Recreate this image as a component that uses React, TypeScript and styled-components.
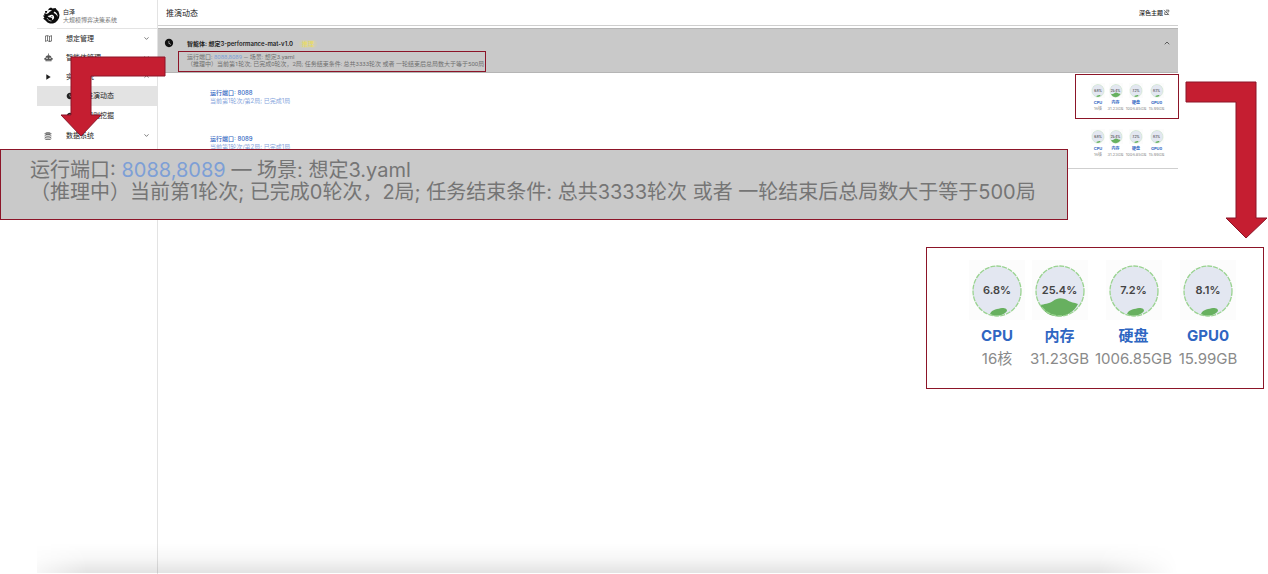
import React from "react";
import styled, { createGlobalStyle, css } from "styled-components";
import { ChevronDown, ChevronUp } from "lucide-react";
import { MdOutlineMap, MdWatchLater } from "react-icons/md";

const RED = "#c51e31";
const DARK_RED = "#8c1528";
const SANS = '"Inter", "Noto Sans CJK SC", sans-serif';

const GlobalStyle = createGlobalStyle`
  * { box-sizing: border-box; }
  body { margin: 0; background: #fff; color: #222; font-family: ${SANS}; }
  button { font: inherit; color: inherit; background: none; border: 0; padding: 0; cursor: pointer; }
  a { color: inherit; text-decoration: none; }
  h1, h2, p, ul { margin: 0; padding: 0; font-weight: inherit; }
  ul { list-style: none; }
  svg { display: block; flex: none; }
`;

const Page = styled.div`
  position: relative;
  min-height: 100vh;
  padding: 0 90px 0 37px;
  display: flex;
  overflow: hidden;
`;

/* ---------- sidebar ---------- */

const Sidebar = styled.aside`
  flex: none;
  width: 121px;
  border-right: 1px solid #e3e3e3;
`;

const Brand = styled.div`
  display: flex;
  align-items: center;
  gap: 3px;
  height: 29px;
  padding: 3px 0 0 6px;
  border-bottom: 1px solid #e3e3e3;
`;

const BrandName = styled.p`
  font-size: 6px;
  line-height: 8px;
`;

const BrandNote = styled(BrandName)`
  color: #777;
`;

const MenuButton = styled.button`
  display: grid;
  grid-template-columns: 8px 1fr 7px;
  align-items: center;
  column-gap: 14px;
  width: 100%;
  height: 19px;
  padding: 0 7px;
  font-size: 7px;
  line-height: 10px;
  text-align: left;
`;

const MenuLink = styled.a<{ $active?: boolean }>`
  display: flex;
  align-items: center;
  gap: 12px;
  height: 20px;
  padding-left: 29px;
  font-size: 7px;
  line-height: 10px;
  background: ${(p) => (p.$active ? "#e3e3e3" : "transparent")};
`;

/* ---------- main column ---------- */

const Main = styled.main`
  flex: 1;
  min-width: 0;
`;

const TopBar = styled.header`
  display: flex;
  align-items: center;
  justify-content: space-between;
  height: 26px;
  margin-bottom: 2px;
  padding: 0 8px;
  border-bottom: 1px solid #cfcfcf;
`;

const Title = styled.h1`
  font-size: 8px;
  line-height: 12px;
`;

const ThemeButton = styled.button`
  display: flex;
  align-items: center;
  font-size: 6px;
  font-weight: 500;
  line-height: 10px;
`;

const AgentHead = styled.section`
  display: grid;
  grid-template-columns: 10px 1fr 8px;
  align-items: start;
  column-gap: 13px;
  height: 45px;
  padding: 9px 7px 0 6px;
  background: #c9c9c9;
  border-top: 1px solid #b5b5b5;
  border-bottom: 1px solid #b5b5b5;
`;

const AgentTitle = styled.h2`
  display: flex;
  align-items: center;
  gap: 6px;
  height: 11px;
  margin-bottom: 4px;
  font-size: 6px;
  font-weight: 600;
`;

const Tag = styled.span`
  padding: 0 3px;
  border-radius: 4px;
  background: #cfcdb9;
  color: #e9dc62;
  font-size: 6px;
  font-weight: 500;
  line-height: 8px;
`;

const AgentNote = styled.p`
  color: #6f6f6f;
  font-family: Roboto, "Noto Sans CJK SC", sans-serif;
  font-size: 6px;
  line-height: 7px;
  white-space: nowrap;
`;

const CollapseButton = styled.button`
  padding-top: 1px;
`;

const Ports = styled.span`
  color: #7d9fd6;
`;

const PortList = styled.ul`
  padding-bottom: 3px;
  border-bottom: 1px solid #cfcfcf;
`;

const PortRow = styled.li`
  display: flex;
  justify-content: space-between;
  height: 46px;
  padding: 10px 13px 0 52px;
`;

const PortText = styled.div`
  padding-top: 6px;
`;

const PortName = styled.a`
  display: block;
  color: #2f66c2;
  font-size: 6px;
  font-weight: 500;
  line-height: 8px;
`;

const PortState = styled.p`
  color: #86a5dc;
  font-size: 6px;
  line-height: 8px;
`;

/* ---------- resource gauges ---------- */

const Stats = styled.div<{ $large?: boolean }>`
  display: grid;
  ${(p) =>
    p.$large
      ? css`
          grid-template-columns: 56px 59px 79px 60px;
          column-gap: 5px;
        `
      : css`
          grid-template-columns: 16px 17px 22px 17px;
          column-gap: 1px;
        `}
`;

const Stat = styled.div<{ $large?: boolean }>`
  display: flex;
  flex-direction: column;
  align-items: center;
  white-space: nowrap;
  font-size: ${(p) => (p.$large ? 15 : 4)}px;
`;

const Gauge = styled.div<{ $large?: boolean }>`
  display: grid;
  place-items: center;
  width: ${(p) => (p.$large ? 56 : 14)}px;
  height: ${(p) => (p.$large ? 60 : 15)}px;
  margin-bottom: ${(p) => (p.$large ? 6 : 2)}px;
  background: #fcfcfc;
  > * { grid-area: 1 / 1; }
`;

const Percent = styled.span<{ $large?: boolean }>`
  color: #444;
  font-size: ${(p) => (p.$large ? 11 : 3)}px;
  font-weight: 600;
`;

const StatName = styled.span<{ $large?: boolean }>`
  color: #2f66c2;
  font-weight: 700;
  line-height: ${(p) => (p.$large ? 20 : 6)}px;
`;

const StatValue = styled.span<{ $large?: boolean }>`
  color: #8a8a8a;
  line-height: ${(p) => (p.$large ? 26 : 5)}px;
`;

/* ---------- annotations lying over the page ---------- */

const Frame = styled.div`
  position: absolute;
  border: 1px solid ${DARK_RED};
`;

const NoteFrame = styled(Frame)`
  left: 178px;
  top: 51px;
  width: 308px;
  height: 21px;
`;

const StatFrame = styled(Frame)`
  right: 89px;
  top: 74px;
  width: 104px;
  height: 45px;
`;

const NoteCallout = styled(Frame)`
  left: 0;
  top: 149px;
  padding: 9px 31px 16px 29px;
  background: #c9c9c9;
  color: #757575;
  font-size: 20px;
  line-height: 22px;
  white-space: nowrap;
`;

const StatCallout = styled(Frame)`
  right: 4px;
  top: 247px;
  padding: 12px 25px 16px 42px;
  background: #fff;
`;

const LeftArrow = styled.svg`
  position: absolute;
  left: 60px;
  top: 56px;
`;

const RightArrow = styled.svg`
  position: absolute;
  right: 0;
  top: 81px;
`;

const BottomShade = styled.div`
  position: absolute;
  left: 37px;
  right: 90px;
  bottom: 1px;
  height: 30px;
  pointer-events: none;
  background: linear-gradient(to bottom, rgba(0, 0, 0, 0), rgba(0, 0, 0, 0.03) 50%, rgba(0, 0, 0, 0.11));
  mask-image: linear-gradient(to right, rgba(0, 0, 0, 0.3), #000 50px, #000 calc(100% - 80px), transparent);
`;

/* ---------- icons ---------- */

const Logo = () => (
  <svg width="17" height="17" viewBox="0 0 34 34" aria-hidden="true">
    <path
      d="M4 8l5 0 3-5 4-2 3 2 6-1 2 3 4 4 2 7-1 6-3 5-4 4-5 2-6 0-5-2-4-4-5-4 3-1-3-5 3 0-1-4 3 0z"
      fill="#0c0c0c"
    />
    <path d="M9 7c3-2 7-1 9 1-3 0-5 1-6 3-2 3-5 3-8 3 3-1 4-4 5-7z" fill="#fff" />
    <path d="M23 9c4 2 7 6 6 11-1-4-4-7-8-8z" fill="#fff" />
    <path d="M13 17c3-3 8-2 9 2 1 3-1 6-4 7 1-3 0-5-3-5-2 0-4-1-6-3z" fill="#fff" />
    <path d="M16 18l3 1-1 2z" fill="#0c0c0c" />
    <path d="M8 22c2 4 5 6 9 6" fill="none" stroke="#fff" strokeWidth="1.3" />
  </svg>
);

const RobotIcon = () => (
  <svg width="9" height="9" viewBox="0 0 24 24" fill="#555" aria-hidden="true">
    <path d="M11 1h2v6h-2z" />
    <path
      fillRule="evenodd"
      d="M12 6c5 0 8 3 8 7h3v5h-3v4H4v-4H1v-5h3c0-4 3-7 8-7zM8 12a2 2 0 100 4 2 2 0 000-4zm8 0a2 2 0 100 4 2 2 0 000-4zM6 19v1h12v-1z"
    />
  </svg>
);

const PlayIcon = () => (
  <svg width="8" height="8" viewBox="0 0 24 24" fill="#1d1d1d" aria-hidden="true">
    <path d="M7 4l13 8-13 8z" />
  </svg>
);

const StackIcon = () => (
  <svg width="8" height="8" viewBox="0 0 24 24" fill="none" stroke="#555" strokeWidth="2.4" aria-hidden="true">
    <ellipse cx="12" cy="5" rx="9" ry="3" fill="#999" />
    <path d="M2 10c3 4 17 4 20 0M2 15c3 4 17 4 20 0M2 20c3 4 17 4 20 0" />
  </svg>
);

const ThemeIcon = () => (
  <svg width="7" height="7" viewBox="0 0 24 24" fill="none" stroke="#333" strokeWidth="2.4" aria-hidden="true">
    <path d="M3 4l18 16M10 4h10v5l-4 4M6 11v8h12" />
    <path d="M11 12l4-5" />
  </svg>
);

const LOW_WATER = "M20 52c2-5 8-5 12-6 4 0 5 1 5 3-3 4-11 7-17 3z";
const HIGH_WATER = "M7 43c4-1 9-1 13-4 5-4 10-3 14-1 4 3 7 2 11 4-8 16-30 17-38 1z";

const GaugeArt = ({ large, high }: { large?: boolean; high?: boolean }) => (
  <svg width={large ? 56 : 14} height={large ? 60 : 15} viewBox="0 0 56 60" aria-hidden="true">
    <ellipse cx="28" cy="31" rx="24" ry="25" fill="#e3e7f1" />
    <path d={high ? HIGH_WATER : LOW_WATER} transform="translate(1 2)" fill="#67b05f" />
    <ellipse cx="28" cy="31" rx="24" ry="25" fill="none" stroke="#9ad391" strokeWidth="1.3" strokeDasharray="5 1" />
  </svg>
);

/* ---------- data ---------- */

const RESOURCES = [
  { name: "CPU", percent: "6.8%", value: "16核" },
  { name: "内存", percent: "25.4%", value: "31.23GB", high: true },
  { name: "硬盘", percent: "7.2%", value: "1006.85GB" },
  { name: "GPU0", percent: "8.1%", value: "15.99GB" },
];

const PORTS = ["8088", "8089"];

const ResourceStats = ({ large }: { large?: boolean }) => (
  <Stats $large={large}>
    {RESOURCES.map((r) => (
      <Stat key={r.name} $large={large}>
        <Gauge $large={large}>
          <GaugeArt large={large} high={r.high} />
          <Percent $large={large}>{r.percent}</Percent>
        </Gauge>
        <StatName $large={large}>{r.name}</StatName>
        <StatValue $large={large}>{r.value}</StatValue>
      </Stat>
    ))}
  </Stats>
);

const RunStatus = () => (
  <>
    运行端口: <Ports>8088,8089</Ports> — 场景: 想定3.yaml
    <br />
    （推理中）当前第1轮次; 已完成0轮次，2局; 任务结束条件: 总共3333轮次 或者 一轮结束后总局数大于等于500局
  </>
);

export default function App() {
  return (
    <>
      <GlobalStyle />
      <Page lang="zh-CN">
        <Sidebar>
          <Brand>
            <Logo />
            <div>
              <BrandName>白泽</BrandName>
              <BrandNote>大规模博弈决策系统</BrandNote>
            </div>
          </Brand>
          <nav>
            <MenuButton>
              <MdOutlineMap size={9} color="#555" />
              想定管理
              <ChevronDown size={7} />
            </MenuButton>
            <MenuButton>
              <RobotIcon />
              智能体管理
              <ChevronDown size={7} />
            </MenuButton>
            <MenuButton>
              <PlayIcon />
              实验系统
              <ChevronUp size={7} />
            </MenuButton>
            <MenuLink href="#live" $active>
              <MdWatchLater size={8} />
              推演动态
            </MenuLink>
            <MenuLink href="#mining">
              <MdWatchLater size={8} />
              规则挖掘
            </MenuLink>
            <MenuButton>
              <StackIcon />
              数据系统
              <ChevronDown size={7} />
            </MenuButton>
          </nav>
        </Sidebar>

        <Main>
          <TopBar>
            <Title>推演动态</Title>
            <ThemeButton>
              深色主题
              <ThemeIcon />
            </ThemeButton>
          </TopBar>
          <AgentHead>
            <MdWatchLater size={10} color="#111" />
            <div>
              <AgentTitle>
                智能体: 想定3-performance-mat-v1.0
                <Tag>推理</Tag>
              </AgentTitle>
              <AgentNote>
                <RunStatus />
              </AgentNote>
            </div>
            <CollapseButton aria-label="收起">
              <ChevronUp size={8} />
            </CollapseButton>
          </AgentHead>
          <PortList>
            {PORTS.map((port) => (
              <PortRow key={port}>
                <PortText>
                  <PortName href={"#" + port}>运行端口: {port}</PortName>
                  <PortState>当前第1轮次/第2局; 已完成1局</PortState>
                </PortText>
                <ResourceStats />
              </PortRow>
            ))}
          </PortList>
        </Main>

        <BottomShade />
        <NoteFrame />
        <StatFrame />
        <NoteCallout>
          <RunStatus />
        </NoteCallout>
        <StatCallout>
          <ResourceStats large />
        </StatCallout>
        <LeftArrow width="106" height="82" viewBox="0 0 106 82" aria-hidden="true">
          <path d="M105 1v19H31v39h10L21 80 1 59h10V1z" fill={RED} stroke={DARK_RED} />
        </LeftArrow>
        <RightArrow width="83" height="159" viewBox="0 0 83 159" aria-hidden="true">
          <path d="M1 1h70v136h11L61 157 41 137h10V21H1z" fill={RED} stroke={DARK_RED} />
        </RightArrow>
      </Page>
    </>
  );
}
